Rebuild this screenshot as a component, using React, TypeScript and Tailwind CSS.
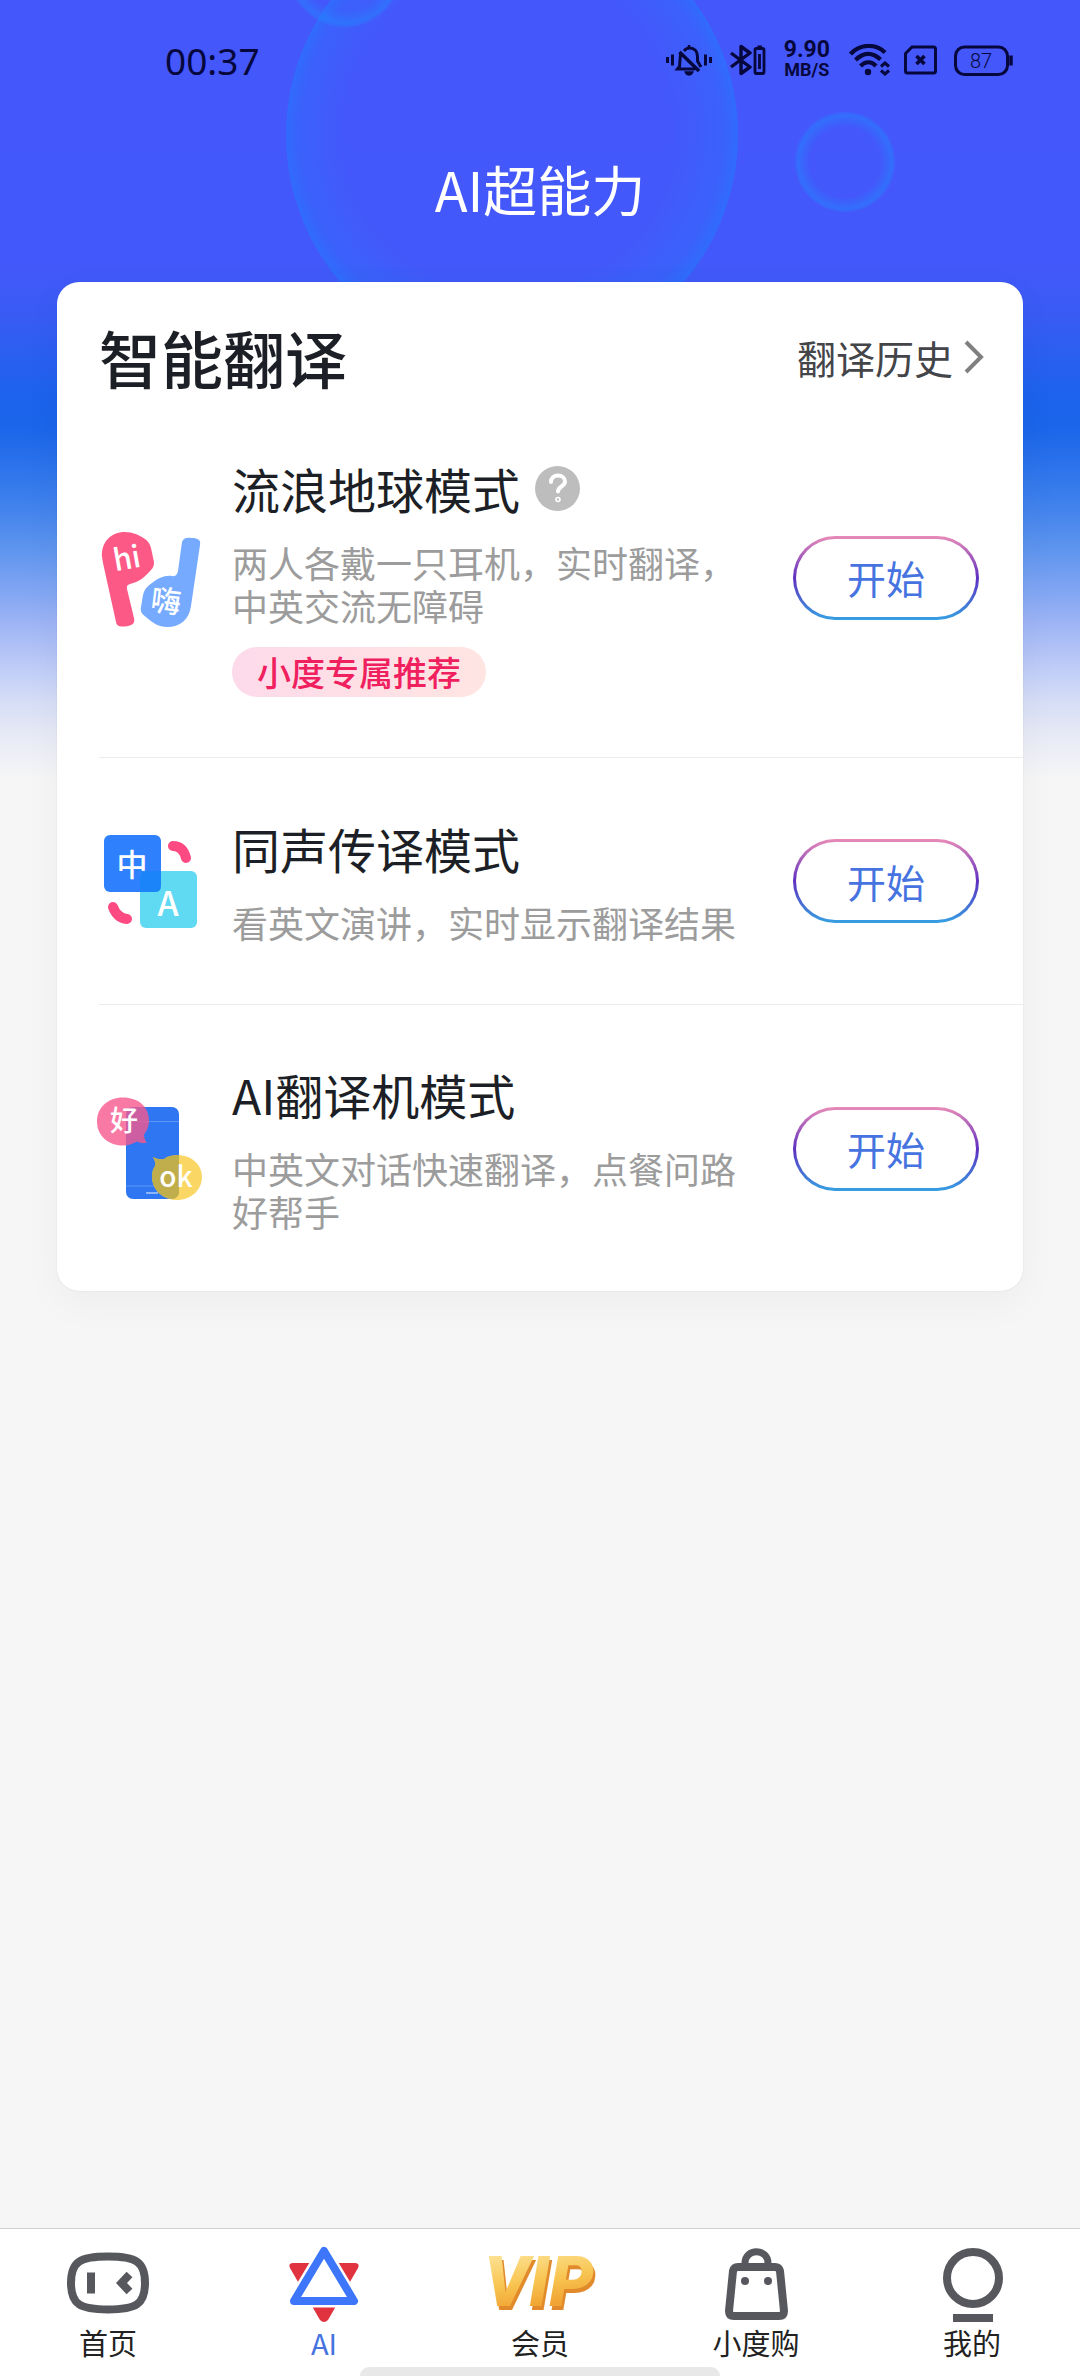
import type { ReactNode } from "react";

const FONT = "font-['Noto_Sans_CJK_SC',sans-serif]";

function StatusBar() {
  return (
    <div className="flex h-[120px] items-center justify-between pl-[165px] pr-[67px] text-[#06073c]">
      <span className="font-['Noto_Sans',sans-serif] text-[37px] leading-none">00:37</span>
      <div className="flex items-center">
        <svg width="46" height="32" viewBox="0 0 46 32" fill="none" stroke="currentColor" strokeWidth="3">
          <path d="M1.500 13v6M6.500 10.500v11M44.500 13v6M39.500 10.500v11" />
          <path d="M14.500 10 13.500 22.500 11.500 25H29M18 7c1.500-2 3-3 5.500-3 5 0 8 3.500 8 8.500v4.500l3.500 6" />
          <path d="M13.500 8 33 27" strokeWidth="3.500" />
          <path d="M23 1v3M20 28.500c1 2.500 5 2.500 6 0z" fill="currentColor" strokeWidth="2.500" />
        </svg>
        <svg className="ml-[18px]" width="36" height="32" viewBox="0 0 36 32" fill="none" stroke="currentColor" strokeWidth="3.400">
          <path d="M1 9l19 14-9 6.500V2.500L20 9 1 23" strokeLinejoin="round" />
          <rect x="25" y="4.500" width="9" height="25" rx="1.500" strokeWidth="2.800" />
          <path d="M27.500 3h4.500M29.500 10v15" strokeWidth="2.800" />
        </svg>
        <div className="ml-[18px] flex flex-col items-center font-['Roboto',sans-serif] font-bold">
          <span className="text-[23px] leading-[20px]">9.90</span>
          <span className="text-[18px] leading-[20px]">MB/S</span>
        </div>
        <svg className="ml-[19px]" width="41" height="32" viewBox="0 0 41 32" fill="none" stroke="currentColor" strokeWidth="4.200">
          <path d="M1.500 10C11-.5 27-.5 36 8.500M6.500 16c8-8 17-8 25-.5M11.500 22c5-5 11-5 15.500 0" />
          <circle cx="19" cy="28" r="3.200" fill="currentColor" stroke="none" />
          <path d="M32 22.500l4-3.500 4 3.500M32 26.500l4 3.500 4-3.500" strokeWidth="3" />
        </svg>
        <svg className="ml-[14px]" width="33" height="30" viewBox="0 0 33 30" fill="none" stroke="currentColor" strokeWidth="3">
          <path d="M8 2h21.500q2 0 2 2v22q0 2-2 2h-26q-2 0-2-2V8.500z" />
          <path d="M12.500 11l8 8M20.500 11l-8 8" strokeWidth="3.600" />
        </svg>
        <svg className="ml-[17px]" width="59" height="31" viewBox="0 0 59 31" fill="none" stroke="currentColor" strokeWidth="3">
          <rect x="1.500" y="2" width="52" height="27.500" rx="9" />
          <path d="M57 10.500v10" strokeWidth="3.500" />
          <text x="27" y="23" textAnchor="middle" fontSize="20" fontFamily="Roboto" fontWeight="300" fill="currentColor" stroke="none">87</text>
        </svg>
      </div>
    </div>
  );
}

function Bubbles() {
  return (
    <svg className="absolute left-0 top-0 h-[420px] w-full" viewBox="0 0 1080 420" preserveAspectRatio="xMidYMin slice">
      <defs>
        <radialGradient id="bubble" fx="0.470" fy="0.460">
          <stop offset="0.720" stopColor="#1a8cff" stopOpacity="0" />
          <stop offset="0.930" stopColor="#1a84ff" stopOpacity="0.200" />
          <stop offset="1" stopColor="#1488ff" stopOpacity="0.420" />
        </radialGradient>
        <radialGradient id="bubbleSmall">
          <stop offset="0.700" stopColor="#1a8cff" stopOpacity="0" />
          <stop offset="0.930" stopColor="#1a90ff" stopOpacity="0.400" />
          <stop offset="1" stopColor="#1a90ff" stopOpacity="0.200" />
        </radialGradient>
      </defs>
      <circle cx="512" cy="135" r="226" fill="url(#bubble)" />
      <circle cx="345" cy="-30" r="57" fill="url(#bubbleSmall)" />
      <circle cx="845" cy="162" r="50" fill="url(#bubbleSmall)" />
    </svg>
  );
}

function EarthIcon() {
  return (
    <svg className="size-[100px] shrink-0 overflow-visible" viewBox="19 28 100 100" fontFamily="'Noto Sans CJK SC', sans-serif">
      <path d="M22 57C21 42 31 32 45 32c8 0 14 3 20 7 3 2 5 5 6 9l3 14c0 4-1 6-3 8-6 7-12 12-21 14q-4 1-3 5l7 29c1 5-1 7-6 8-7 1-11 1-12-4L23 63z" fill="#fd5987" />
      <path d="M102 42c1-4 5-5 10-4 6 0 9 2 8 7l-9 61c-2 14-11 21-24 21-8 0-14-4-20-9-5-4-7-6-6-11l2-12c1-5 4-9 9-12 6-5 13-8 20-7q5 1 6-5z" fill="#76aaff" />
      <text x="47" y="69" textAnchor="middle" fontSize="30" fontWeight="500" fill="#fff" transform="rotate(-10 47 60)">hi</text>
      <text x="86" y="112" textAnchor="middle" fontSize="30" fontWeight="500" fill="#fff" transform="rotate(7 86 101)">嗨</text>
    </svg>
  );
}

function InterpretIcon() {
  return (
    <svg className="size-[100px] shrink-0 overflow-visible" viewBox="19 20 100 100" fontFamily="'Noto Sans CJK SC', sans-serif">
      <rect x="24" y="24" width="57" height="57" rx="6" fill="#2f80fd" />
      <rect x="60" y="60" width="57" height="57" rx="6" fill="#5fdaf2" />
      <path d="M60 66q0-6 6-6h15v15q0 6-6 6H60z" fill="#1b84f8" />
      <path d="M93 35q10 0 13 12M33 96q4 11 14 12" fill="none" stroke="#fd4a83" strokeWidth="10" strokeLinecap="round" />
      <text x="52" y="65" textAnchor="middle" fontSize="31" fontWeight="500" fill="#fff">中</text>
      <text x="88" y="105" textAnchor="middle" fontSize="34" fontWeight="500" fill="#fff">A</text>
    </svg>
  );
}

function DeviceIcon() {
  return (
    <svg className="size-[100px] shrink-0 overflow-visible" viewBox="19 18 100 100" fontFamily="'Noto Sans CJK SC', sans-serif">
      <rect x="46" y="26" width="53" height="92" rx="7" fill="#2f77f2" />
      <path d="M46 40.500h53M46 105h53" stroke="#5e97f7" />
      <path d="M66 112h12" stroke="#8db5fa" strokeWidth="2" />
      <path d="M43 16.500c15 0 26 9 26 23 0 6-2 10-5 14q0 5 3 8-5 2-10-1c-4 2-8 4-14 4-15 0-26-10-26-24s11-24 26-24z" fill="#f6588d" fillOpacity="0.800" />
      <path d="M73 76q5 3 11 2c4-3 8-4 13-4 14 0 25 9 25 22s-11 23-25 23-25-10-25-23c0-5 1-8 3-11q1-4-2-9z" fill="#f9cd3d" fillOpacity="0.800" />
      <path d="M73 76q5 3 11 2c4-3 9-4 15-4v38q-1 5-7 6c-12-2-20-11-20-22 0-5 1-8 3-11q1-4-2-9z" fill="#bfae4b" />
      <text x="44" y="50" textAnchor="middle" fontSize="28" fontWeight="500" fill="#fff">好</text>
      <text x="96" y="106" textAnchor="middle" fontSize="28" fontWeight="500" fill="#fff">ok</text>
    </svg>
  );
}

interface ModeProps {
  icon: ReactNode;
  title: string;
  desc: string;
  tag?: string;
  help?: boolean;
  last?: boolean;
}

function Mode({ icon, title, desc, tag, help, last }: ModeProps) {
  return (
    <li className={`ml-[42px] flex items-center pr-[44px] ${last ? "pb-[58px] pt-[59px]" : "border-b border-[#ececec] py-[60px]"}`}>
      {icon}
      <div className="ml-[33px] mr-[40px] min-w-0 flex-1">
        <div className="flex items-center gap-[15px]">
          <h3 className="text-[48px] leading-[60px] text-[#1d1f26]">{title}</h3>
          {help && (
            <button aria-label="帮助" className="flex size-[45px] items-center justify-center rounded-full bg-[#bdbdbd]">
              <svg width="20" height="30" viewBox="0 0 20 30" fill="none" stroke="#fff" strokeWidth="4" strokeLinecap="round">
                <path d="M3 9c0-4 3-6.500 7-6.500s7 2.500 7 6c0 5-7 5-7 10" />
                <circle cx="10" cy="26.500" r="0.800" />
              </svg>
            </button>
          )}
        </div>
        <p className="mt-[23px] text-[36px] leading-[43px] text-[#9c9c9c]">{desc}</p>
        {tag && (
          <span className="mt-[20px] inline-flex h-[50px] items-center rounded-full bg-linear-to-r from-[#fddaea] to-[#ffe5e2] px-[25px] align-top text-[34px] font-medium leading-none text-[#f0205f]">{tag}</span>
        )}
      </div>
      <button className="h-[84px] w-[186px] shrink-0 rounded-full border-3 border-transparent text-[39px] leading-none text-[#4673df] [background:linear-gradient(#fff,#fff)_padding-box,linear-gradient(to_bottom,#e98bb8,#5f2fc0_50%,#35a0e2)_border-box]">开始</button>
    </li>
  );
}

const HomeIcon = (
  <svg width="110" height="80" viewBox="0 0 110 80" fill="none" stroke="#56585d" strokeWidth="8">
    <path d="M55 13.500c28 0 37 5 37 26.500s-9 26.500-37 26.500S18 61.500 18 40s9-26.500 37-26.500z" />
    <path d="M38 29.500v21M76.500 31.500l-8 8.500 8 8.500" />
  </svg>
);

const AiIcon = (
  <svg width="110" height="80" viewBox="0 0 110 80">
    <path d="M24 20h62q5 0 3 5L59 77q-4 4-8 0L21 25q-2-5 3-5z" fill="#e0333f" />
    <path d="M55 8 85 58H25z" fill="#fff" stroke="#fff" strokeWidth="13" strokeLinejoin="round" />
    <path d="M55 8 85 58H25z" fill="#fff" stroke="#3e76fb" strokeWidth="8" strokeLinejoin="round" />
  </svg>
);

const VipIcon = (
  <svg width="110" height="80" viewBox="0 0 110 80" className="overflow-visible drop-shadow-[2px_4px_0px_#e08a2c]" fontFamily="Roboto, sans-serif" fontWeight="900" fontStyle="italic" fontSize="70" textAnchor="middle">
    <defs>
      <linearGradient id="gold" x1="0" y1="0" x2="0.200" y2="1">
        <stop offset="0.200" stopColor="#fde08f" />
        <stop offset="0.550" stopColor="#f8c552" />
        <stop offset="0.850" stopColor="#f1a432" />
      </linearGradient>
    </defs>
    <text x="54" y="63" fill="url(#gold)">VIP</text>
  </svg>
);

const BagIcon = (
  <svg width="110" height="80" viewBox="0 0 110 80" fill="none" stroke="#56585d" strokeWidth="8">
    <path d="M37 24h37q4 0 5 4l4 40q0 5-5 5H33q-5 0-5-5l4-40q1-4 5-4z" />
    <path d="M44 24v-4c0-15 23-15 23 0v4" strokeWidth="7" />
    <g fill="#56585d" stroke="none"><circle cx="44" cy="38" r="4" /><circle cx="67" cy="38" r="4" /></g>
  </svg>
);

const MeIcon = (
  <svg width="110" height="80" viewBox="0 0 110 80" fill="none" stroke="#56585d" strokeWidth="8">
    <circle cx="56" cy="35" r="26" />
    <path d="M36 75h40" />
  </svg>
);

const tabs = [
  { label: "首页", icon: HomeIcon },
  { label: "AI", icon: AiIcon, active: true },
  { label: "会员", icon: VipIcon },
  { label: "小度购", icon: BagIcon },
  { label: "我的", icon: MeIcon },
];

export default function App() {
  return (
    <div className={`relative flex min-h-screen flex-col bg-[#f6f6f6] ${FONT}`}>
      <div className="absolute inset-x-0 top-0 h-[790px] overflow-hidden bg-[linear-gradient(to_bottom,#4457fb_0px,#4358fa_260px,#3a5bf5_310px,#1b63eb_400px,#1b66ea_430px,#3a7dec_495px,#5b93ee_545px,#80a5f3_590px,#9fb5f5_625px,#c0cdf7_670px,#d8dff6_705px,#e9ecf6_740px,#f6f6f6_780px)]">
        <Bubbles />
      </div>

      <header className="relative pb-[24px]">
        <StatusBar />
        <h1 className="text-center text-[54px] leading-[138px] text-white">AI超能力</h1>
      </header>

      <main className="relative flex-1">
        <section className="mx-[57px] rounded-[22px] bg-white shadow-[0_0_1px_rgba(0,0,0,0.2),0_12px_40px_rgba(0,0,0,0.04)]">
          <div className="flex items-center justify-between pb-[5px] pl-[42px] pr-[38px] pt-[39px]">
            <h2 className="text-[62px] font-medium leading-[72px] text-[#1d1f26]">智能翻译</h2>
            <a href="#history" className="flex items-center gap-[10px] text-[39px] leading-[72px] text-[#444549]">
              翻译历史
              <svg width="22" height="34" viewBox="0 0 22 34" fill="none" stroke="#808080" strokeWidth="4">
                <path d="M3 2l15 15L3 32" />
              </svg>
            </a>
          </div>
          <ul>
            <Mode icon={<EarthIcon />} title="流浪地球模式" desc="两人各戴一只耳机，实时翻译，中英交流无障碍" tag="小度专属推荐" help />
            <Mode icon={<InterpretIcon />} title="同声传译模式" desc="看英文演讲，实时显示翻译结果" />
            <Mode icon={<DeviceIcon />} title="AI翻译机模式" desc="中英文对话快速翻译，点餐问路好帮手" last />
          </ul>
        </section>
      </main>

      <nav className="relative grid grid-cols-5 border-t border-[#cfcfcf] bg-white pb-[14px] pt-[14px]">
        {tabs.map((tab) => (
          <a key={tab.label} href="#" className={`flex flex-col items-center text-[29px] leading-[39px] ${tab.active ? "text-[#4673df]" : "text-[#222]"}`}>
            {tab.icon}
            {tab.label}
          </a>
        ))}
        <div className="absolute bottom-0 left-1/3 right-1/3 h-[9px] rounded-t-full bg-[#e8e8e8]" />
      </nav>
    </div>
  );
}
